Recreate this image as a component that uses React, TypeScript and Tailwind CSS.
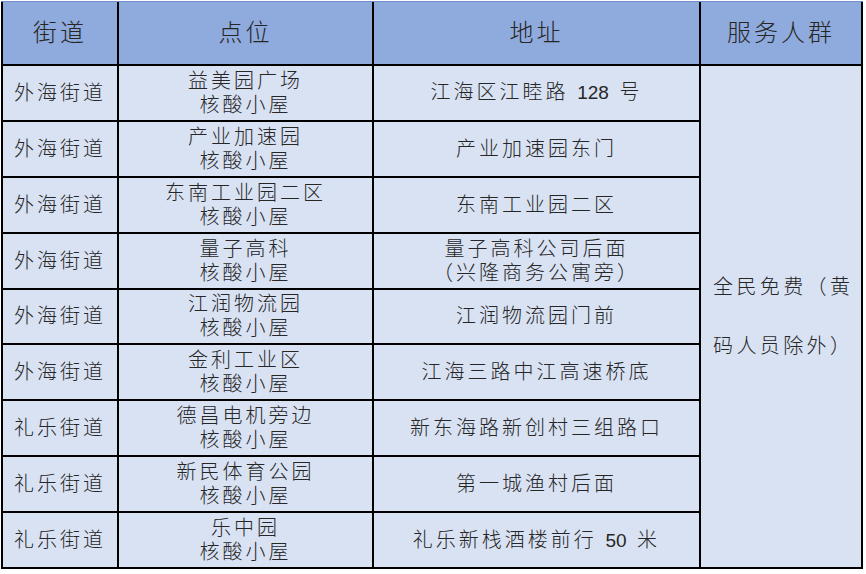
import React from "react";

const rows: [string, string[], string[]][] = [
  ["外海街道", ["益美园广场", "核酸小屋"], ["江海区江睦路 128 号"]],
  ["外海街道", ["产业加速园", "核酸小屋"], ["产业加速园东门"]],
  ["外海街道", ["东南工业园二区", "核酸小屋"], ["东南工业园二区"]],
  ["外海街道", ["量子高科", "核酸小屋"], ["量子高科公司后面", "（兴隆商务公寓旁）"]],
  ["外海街道", ["江润物流园", "核酸小屋"], ["江润物流园门前"]],
  ["外海街道", ["金利工业区", "核酸小屋"], ["江海三路中江高速桥底"]],
  ["礼乐街道", ["德昌电机旁边", "核酸小屋"], ["新东海路新创村三组路口"]],
  ["礼乐街道", ["新民体育公园", "核酸小屋"], ["第一城渔村后面"]],
  ["礼乐街道", ["乐中园", "核酸小屋"], ["礼乐新栈酒楼前行 50 米"]],
];

function Line({ text }: { text: string }) {
  const parts = text.split(/(\d+)/);
  return (
    <div className="whitespace-pre">
      {parts.map((p, i) =>
        /^\d+$/.test(p) ? (
          <span key={i} className="tracking-[0px] mr-[2px] text-[19px]">
            {p}
          </span>
        ) : (
          <React.Fragment key={i}>{p}</React.Fragment>
        )
      )}
    </div>
  );
}

function Cell({ lines }: { lines: string[] }) {
  return (
    <div className="bg-[#d9e2f3] flex flex-col items-center justify-center text-center text-[20px] leading-[24px] tracking-[3px] text-[#262626]">
      {lines.map((l, i) => (
        <Line key={i} text={l} />
      ))}
    </div>
  );
}

function Head({ text }: { text: string }) {
  return (
    <div className="bg-[#8faadc] flex items-center justify-center text-[24px] tracking-[3px] text-[#262626]">
      {text}
    </div>
  );
}

export default function App() {
  return (
    <div className="w-[866px] h-[574px] bg-white pt-[1px] pl-[1px] font-['Liberation_Sans','Noto_Sans_CJK_SC',sans-serif] font-light">
      <div className="w-[862px] h-[568px] border-t border-[#7290cc] bg-black px-[2px] pb-[2px] grid grid-cols-[114px_253px_325px_160px] grid-rows-[62px_repeat(9,1fr)] gap-[2px]">
        <Head text="街道" />
        <Head text="点位" />
        <Head text="地址" />
        <Head text="服务人群" />
        {rows.map((r, i) => (
          <React.Fragment key={i}>
            <Cell lines={[r[0]]} />
            <Cell lines={r[1]} />
            <Cell lines={r[2]} />
            {i === 0 && (
              <div className="row-span-9 bg-[#d9e2f3] flex flex-col justify-center pl-[12px] text-[20px] leading-[59px] tracking-[3.4px] text-[#262626]">
                <div>全民免费（黄</div>
                <div>码人员除外）</div>
              </div>
            )}
          </React.Fragment>
        ))}
      </div>
    </div>
  );
}
